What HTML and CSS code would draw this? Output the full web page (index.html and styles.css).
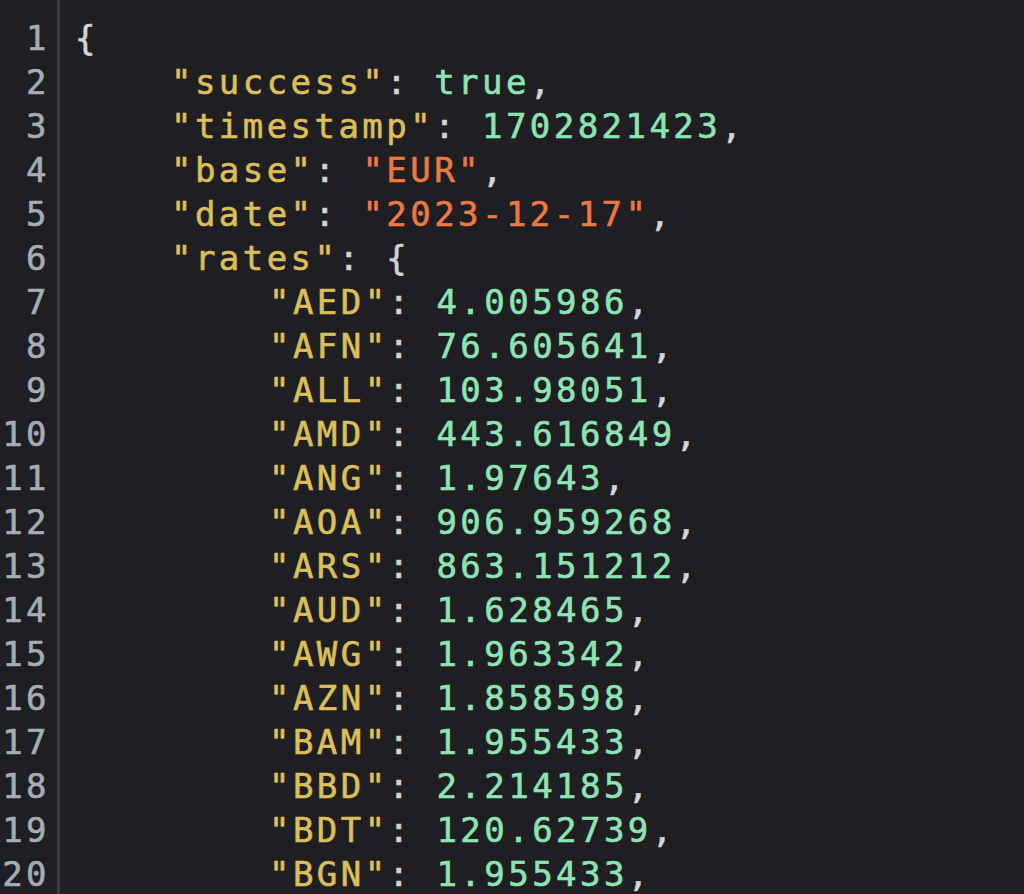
FILE: index.html
```html
<!DOCTYPE html>
<html lang="en">
<head>
<meta charset="utf-8">
<title>rates.json</title>
<link rel="stylesheet" href="styles.css">
</head>
<body>
<div class="editor">
  <div class="gutter">
    <div class="ln">1</div><div class="ln">2</div><div class="ln">3</div><div class="ln">4</div><div class="ln">5</div>
    <div class="ln">6</div><div class="ln">7</div><div class="ln">8</div><div class="ln">9</div><div class="ln">10</div>
    <div class="ln">11</div><div class="ln">12</div><div class="ln">13</div><div class="ln">14</div><div class="ln">15</div>
    <div class="ln">16</div><div class="ln">17</div><div class="ln">18</div><div class="ln">19</div><div class="ln">20</div>
  </div>
  <div class="sep"></div>
  <div class="code">
    <div class="line"><span class="p">{</span></div>
    <div class="line l1"><span class="k">"success"</span><span class="p">: </span><span class="n">true</span><span class="p">,</span></div>
    <div class="line l1"><span class="k">"timestamp"</span><span class="p">: </span><span class="n">1702821423</span><span class="p">,</span></div>
    <div class="line l1"><span class="k">"base"</span><span class="p">: </span><span class="s">"EUR"</span><span class="p">,</span></div>
    <div class="line l1"><span class="k">"date"</span><span class="p">: </span><span class="s">"2023-12-17"</span><span class="p">,</span></div>
    <div class="line l1"><span class="k">"rates"</span><span class="p">: {</span></div>
    <div class="line l2"><span class="k">"AED"</span><span class="p">: </span><span class="n">4.005986</span><span class="p">,</span></div>
    <div class="line l2"><span class="k">"AFN"</span><span class="p">: </span><span class="n">76.605641</span><span class="p">,</span></div>
    <div class="line l2"><span class="k">"ALL"</span><span class="p">: </span><span class="n">103.98051</span><span class="p">,</span></div>
    <div class="line l2"><span class="k">"AMD"</span><span class="p">: </span><span class="n">443.616849</span><span class="p">,</span></div>
    <div class="line l2"><span class="k">"ANG"</span><span class="p">: </span><span class="n">1.97643</span><span class="p">,</span></div>
    <div class="line l2"><span class="k">"AOA"</span><span class="p">: </span><span class="n">906.959268</span><span class="p">,</span></div>
    <div class="line l2"><span class="k">"ARS"</span><span class="p">: </span><span class="n">863.151212</span><span class="p">,</span></div>
    <div class="line l2"><span class="k">"AUD"</span><span class="p">: </span><span class="n">1.628465</span><span class="p">,</span></div>
    <div class="line l2"><span class="k">"AWG"</span><span class="p">: </span><span class="n">1.963342</span><span class="p">,</span></div>
    <div class="line l2"><span class="k">"AZN"</span><span class="p">: </span><span class="n">1.858598</span><span class="p">,</span></div>
    <div class="line l2"><span class="k">"BAM"</span><span class="p">: </span><span class="n">1.955433</span><span class="p">,</span></div>
    <div class="line l2"><span class="k">"BBD"</span><span class="p">: </span><span class="n">2.214185</span><span class="p">,</span></div>
    <div class="line l2"><span class="k">"BDT"</span><span class="p">: </span><span class="n">120.62739</span><span class="p">,</span></div>
    <div class="line l2"><span class="k">"BGN"</span><span class="p">: </span><span class="n">1.955433</span><span class="p">,</span></div>
  </div>
</div>
</body>
</html>
```
FILE: styles.css
```css
html, body {
  margin: 0;
  padding: 0;
  background: #1f1f23;
  height: 100%;
  overflow: hidden;
}

.editor {
  display: flex;
  height: 894px;
  font-family: "DejaVu Sans Mono", "Liberation Mono", monospace;
  font-size: 34px;
  letter-spacing: 3.45px;
  line-height: 44px;
  padding-top: 16px;
  box-sizing: border-box;
  -webkit-text-stroke: 0.6px currentColor;
}

.gutter {
  width: 50px;
  text-align: right;
  color: #a4acb4;
  flex: none;
}

.ln {
  white-space: pre;
}

.sep {
  width: 3px;
  margin-left: 7px;
  margin-top: -16px;
  background: #3b3c40;
  flex: none;
}

.code {
  padding-left: 15px;
  color: #d4d4d4;
}

.line {
  white-space: pre;
}

.line.l1 { padding-left: 96px; }
.line.l2 { padding-left: 194px; }

.k { color: #dbbf58; }
.n { color: #8de4b4; }
.s { color: #ec7842; }
.p { color: #d4d4d4; }
```
